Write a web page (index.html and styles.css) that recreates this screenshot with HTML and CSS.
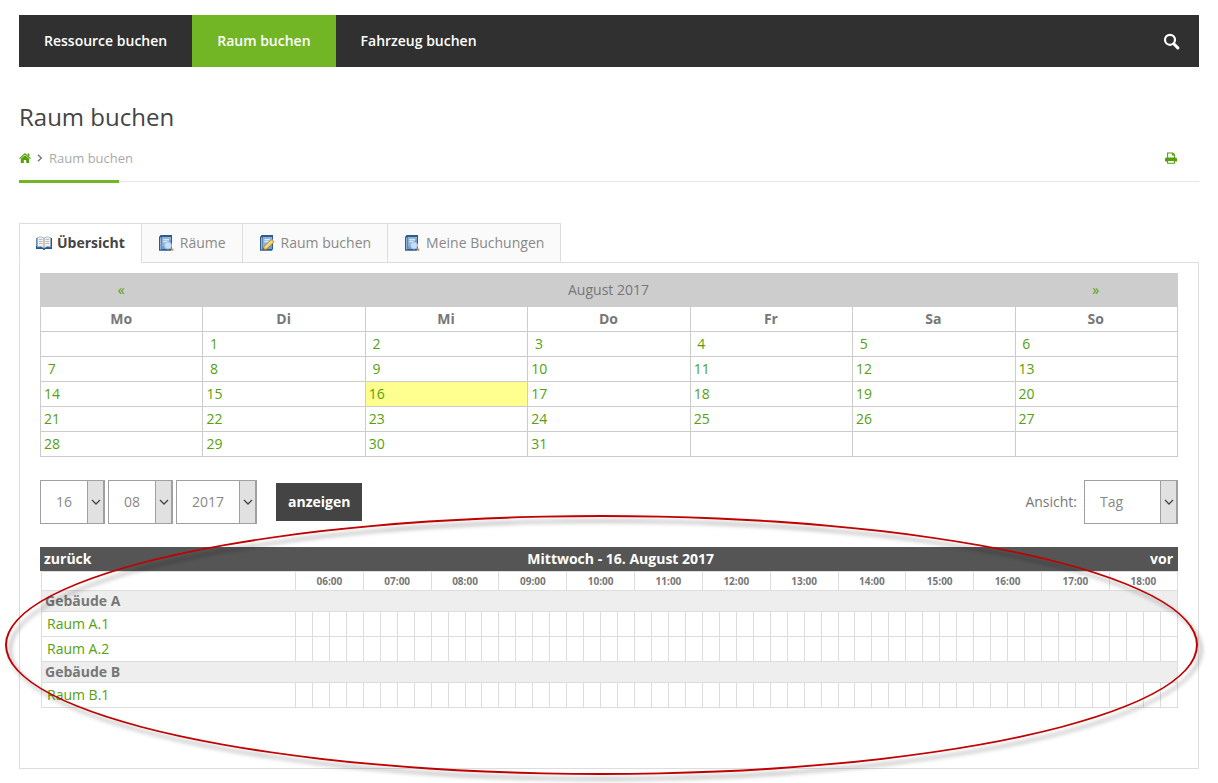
FILE: index.html
```html
<!DOCTYPE html>
<html lang="de">
<head>
<meta charset="utf-8">
<title>Raum buchen</title>
<link rel="stylesheet" href="styles.css">
</head>
<body>
<svg class="symbols" aria-hidden="true">
  <symbol id="book" viewBox="0 0 16 16">
    <path d="M1 2L2.500 0H14v14l-1 1.800H1z" fill="#2f5a8f"/>
    <path d="M2 2.500h1.500v12H2z" fill="#8fb2d6"/>
    <path d="M4 2h9v12H4z" fill="#6f9cc8"/>
    <path d="M4 2h9v2L4 12z" fill="#8db3d8"/>
    <path d="M5.500 4.500h5.500v3.500h-5.500z" fill="#a9c8e4"/>
    <path d="M5.500 4.500H11M5.500 6.500H9" stroke="#dce9f5"/>
  </symbol>
  <symbol id="book-search" viewBox="0 0 16 16">
    <use href="#book" width="16" height="16"/>
    <circle cx="10" cy="10.500" r="3.500" fill="#c6def7" stroke="#a3c2e6"/>
    <path d="M12.800 13.200l2.200 2.200" stroke="#c98444" stroke-width="1.800"/>
  </symbol>
  <symbol id="chevron" viewBox="0 0 10 6">
    <path d="M1 1l4 4 4-4" fill="none" stroke="#444" stroke-width="1.300"/>
  </symbol>
</svg>

<div class="page">
  <nav class="main-nav">
    <a href="#ressource">Ressource buchen</a>
    <a href="#raum" class="current">Raum buchen</a>
    <a href="#fahrzeug">Fahrzeug buchen</a>
    <button class="search" type="button" aria-label="Suche">
      <svg width="17" height="17" viewBox="0 0 17 17"><circle cx="7" cy="6.800" r="5" fill="none" stroke="#fff" stroke-width="2.200"/><path d="M10.700 10.800l4.100 4.100" stroke="#fff" stroke-width="3" stroke-linecap="round"/></svg>
    </button>
  </nav>

  <header class="page-head">
    <h1>Raum buchen</h1>
    <div class="breadcrumb">
      <a href="#start" aria-label="Startseite"><svg width="12" height="12" viewBox="0 0 12 12"><path d="M6 3.200l4.200 3.600V11H7.200V8H4.800v3H1.800V6.800z" fill="currentColor"/><path d="M.5 6.600L6 1.900l5.500 4.700" fill="none" stroke="currentColor" stroke-width="1.200"/><path d="M8.600 1.500h1.700v3.300L8.600 3.400z" fill="currentColor"/></svg></a>
      <svg class="sep" width="6" height="8" viewBox="0 0 6 8"><path d="M1 .8L4.300 4 1 7.200" fill="none" stroke="currentColor" stroke-width="1.400"/></svg>
      <span>Raum buchen</span>
      <a href="#drucken" class="print" aria-label="Drucken"><svg width="12" height="12" viewBox="0 0 12 12"><path d="M2.600 6V1h5.200l1.600 1.600V6M7.500 1v2h2" fill="none" stroke="currentColor" stroke-width="1.100"/><path d="M1.500 5.500h9q1.500 0 1.500 1.500V9.500H0V7Q0 5.500 1.500 5.500z" fill="currentColor"/><path d="M2.600 8.500h6.800v2.800H2.600z" fill="#fff" stroke="currentColor" stroke-width="1.100"/></svg></a>
    </div>
  </header>

  <div class="tabs">
    <a href="#uebersicht" class="tab active"><svg width="16" height="16" viewBox="0 0 16 16"><path d="M0 3h16v11H9.500l-1 1h-1l-1-1H0z" fill="#1f5794"/><path d="M0 3h1.500v8H0z" fill="#5c8fc4"/><path d="M1.500 2.500Q5 1 8 3q3-2 6.500-.5v9.500Q11 10.500 8 13 5 10.500 1.500 12z" fill="#f1f1ef" stroke="#9caabb" stroke-width=".8"/><path d="M8 3v9.500" stroke="#9a9a9a"/><path d="M3 4.500h3.500M3 6.500h3.500M3 8.500h3.500M9.500 4.500H13M9.500 6.500H13M9.500 8.500H13" stroke="#bdbdbd"/></svg>Übersicht</a>
    <a href="#raeume" class="tab"><svg width="16" height="16"><use href="#book-search"/></svg>Räume</a>
    <a href="#buchen" class="tab"><svg width="16" height="16" viewBox="0 0 16 16"><use href="#book" width="16" height="16"/><path d="M4 14.800l1-3.300L12.500 4.500 15 7l-7.500 7z" fill="#f8cf55" stroke="#bf8735" stroke-width=".8"/><path d="M6.300 12.500l7-6.700" stroke="#fff0a8"/><path d="M4 14.800l.6-1.900 1.300 1.300z" fill="#443a34"/><path d="M12 5l1-1 2.500 2.500-1 1z" fill="#e79a6a"/></svg>Raum buchen</a>
    <a href="#meine" class="tab"><svg width="16" height="16"><use href="#book-search"/></svg>Meine Buchungen</a>
    <span class="tab-rest"></span>
  </div>

  <main class="panel">
    <table class="calendar">
      <thead>
        <tr class="month"><td><a href="#juli">«</a></td><td colspan="5">August 2017</td><td><a href="#september">»</a></td></tr>
        <tr><th>Mo</th><th>Di</th><th>Mi</th><th>Do</th><th>Fr</th><th>Sa</th><th>So</th></tr>
      </thead>
      <tbody>
        <tr><td></td><td>&nbsp;<a href="#d1">1</a></td><td>&nbsp;<a href="#d2">2</a></td><td>&nbsp;<a href="#d3">3</a></td><td>&nbsp;<a href="#d4">4</a></td><td>&nbsp;<a href="#d5">5</a></td><td>&nbsp;<a href="#d6">6</a></td></tr>
        <tr><td>&nbsp;<a href="#d7">7</a></td><td>&nbsp;<a href="#d8">8</a></td><td>&nbsp;<a href="#d9">9</a></td><td><a href="#d10">10</a></td><td><a href="#d11">11</a></td><td><a href="#d12">12</a></td><td><a href="#d13">13</a></td></tr>
        <tr><td><a href="#d14">14</a></td><td><a href="#d15">15</a></td><td class="selected"><a href="#d16">16</a></td><td><a href="#d17">17</a></td><td><a href="#d18">18</a></td><td><a href="#d19">19</a></td><td><a href="#d20">20</a></td></tr>
        <tr><td><a href="#d21">21</a></td><td><a href="#d22">22</a></td><td><a href="#d23">23</a></td><td><a href="#d24">24</a></td><td><a href="#d25">25</a></td><td><a href="#d26">26</a></td><td><a href="#d27">27</a></td></tr>
        <tr><td><a href="#d28">28</a></td><td><a href="#d29">29</a></td><td><a href="#d30">30</a></td><td><a href="#d31">31</a></td><td></td><td></td><td></td></tr>
      </tbody>
    </table>

    <form class="controls">
      <span class="select"><select aria-label="Tag"><option>16</option></select><span class="arrow"><svg width="10" height="6"><use href="#chevron"/></svg></span></span>
      <span class="select"><select aria-label="Monat"><option>08</option></select><span class="arrow"><svg width="10" height="6"><use href="#chevron"/></svg></span></span>
      <span class="select year"><select aria-label="Jahr"><option>2017</option></select><span class="arrow"><svg width="10" height="6"><use href="#chevron"/></svg></span></span>
      <button class="show" type="button">anzeigen</button>
      <label class="view-label" for="view">Ansicht:</label>
      <span class="select view"><select id="view"><option>Tag</option></select><span class="arrow"><svg width="10" height="6"><use href="#chevron"/></svg></span></span>
    </form>

    <section class="schedule">
      <div class="day-bar"><a href="#zurueck">zurück</a><span class="day">Mittwoch - 16. August 2017</span><a href="#vor">vor</a></div>
      <table class="slots">
        <colgroup><col class="room-col"><col span="52"></colgroup>
        <thead>
          <tr><td></td><th colspan="4">06:00</th><th colspan="4">07:00</th><th colspan="4">08:00</th><th colspan="4">09:00</th><th colspan="4">10:00</th><th colspan="4">11:00</th><th colspan="4">12:00</th><th colspan="4">13:00</th><th colspan="4">14:00</th><th colspan="4">15:00</th><th colspan="4">16:00</th><th colspan="4">17:00</th><th colspan="4">18:00</th></tr>
        </thead>
        <tbody>
          <tr class="group"><th colspan="53">Gebäude A</th></tr>
          <tr class="room"><td><a href="#a1">Raum A.1</a></td><td></td><td></td><td></td><td></td><td></td><td></td><td></td><td></td><td></td><td></td><td></td><td></td><td></td><td></td><td></td><td></td><td></td><td></td><td></td><td></td><td></td><td></td><td></td><td></td><td></td><td></td><td></td><td></td><td></td><td></td><td></td><td></td><td></td><td></td><td></td><td></td><td></td><td></td><td></td><td></td><td></td><td></td><td></td><td></td><td></td><td></td><td></td><td></td><td></td><td></td><td></td><td></td></tr>
          <tr class="room"><td><a href="#a2">Raum A.2</a></td><td></td><td></td><td></td><td></td><td></td><td></td><td></td><td></td><td></td><td></td><td></td><td></td><td></td><td></td><td></td><td></td><td></td><td></td><td></td><td></td><td></td><td></td><td></td><td></td><td></td><td></td><td></td><td></td><td></td><td></td><td></td><td></td><td></td><td></td><td></td><td></td><td></td><td></td><td></td><td></td><td></td><td></td><td></td><td></td><td></td><td></td><td></td><td></td><td></td><td></td><td></td><td></td></tr>
          <tr class="group"><th colspan="53">Gebäude B</th></tr>
          <tr class="room"><td><a href="#b1">Raum B.1</a></td><td></td><td></td><td></td><td></td><td></td><td></td><td></td><td></td><td></td><td></td><td></td><td></td><td></td><td></td><td></td><td></td><td></td><td></td><td></td><td></td><td></td><td></td><td></td><td></td><td></td><td></td><td></td><td></td><td></td><td></td><td></td><td></td><td></td><td></td><td></td><td></td><td></td><td></td><td></td><td></td><td></td><td></td><td></td><td></td><td></td><td></td><td></td><td></td><td></td><td></td><td></td><td></td></tr>
        </tbody>
      </table>
      <div class="highlight" aria-hidden="true"></div>
    </section>
  </main>
</div>
</body>
</html>
```

FILE: styles.css
```css
* { box-sizing: border-box; }

body {
  margin: 0;
  background: #fff;
  color: #777;
  font: 14px/20px "Open Sans", "Noto Sans", sans-serif;
}

a { color: #56a00e; text-decoration: none; }
svg { display: block; flex: none; }
table { border-collapse: collapse; table-layout: fixed; width: 100%; }
select, button { font: inherit; }
.symbols { position: absolute; width: 0; height: 0; }
.page { padding: 15px 19px 14px; }

/* Navigation */
.main-nav { display: flex; background: #303030; height: 52px; }
.main-nav a { padding: 16px 25px; color: #fff; font-weight: 600; }
.main-nav .current { background: #72b626; }
.search { margin-left: auto; padding: 0 19px; border: 0; background: none; cursor: pointer; }

/* Heading and breadcrumb */
.page-head { position: relative; padding-top: 34px; border-bottom: 1px solid #e7e7e7; }
.page-head::after {
  content: "";
  position: absolute;
  left: 0;
  bottom: -2px;
  width: 100px;
  height: 3px;
  background: #72b626;
}
h1 { margin: 0; color: #444; font-size: 24px; font-weight: 400; line-height: 32px; }
.breadcrumb {
  display: flex;
  align-items: center;
  padding: 15px 22px 13px 0;
  color: #aaa;
  font-size: 13px;
}
.breadcrumb .sep { margin: 0 6px; color: #777; }
.breadcrumb .print { margin-left: auto; }

/* Tabs */
.tabs { display: flex; margin-top: 41px; }
.tab {
  display: flex;
  align-items: center;
  gap: 6px;
  height: 40px;
  padding: 0 16px;
  border: 1px solid #ddd;
  border-left: 0;
  background: #fafafa;
  color: #888;
}
.tab.active {
  gap: 5px;
  border-left: 1px solid #ddd;
  border-bottom-color: #fff;
  background: #fff;
  color: #444;
  font-weight: 700;
}
.tab-rest { flex: 1; border-bottom: 1px solid #ddd; }

.panel { padding: 10px 20px 60px; border: 1px solid #ddd; border-top: 0; }

/* Calendar */
.calendar th, .calendar td { height: 25px; padding: 0 4px 0 3px; border: 1px solid #ccc; }
.calendar .month td { height: 33px; border-color: #cdcdcd; background: #cdcdcd; text-align: center; }
.calendar .month td + td { border-left: 0; }
.calendar .selected { background: #ffff90; }

/* Date and view controls */
.controls { display: flex; align-items: center; gap: 3px; margin: 23px 0; }
.select { position: relative; width: 65px; height: 44px; }
.select select {
  width: 100%;
  height: 100%;
  padding: 0 18px 0 15px;
  border: 1px solid #a0a0a0;
  border-radius: 0;
  appearance: none;
  background: #fff;
  color: #888;
}
.select.year { width: 81px; }
.select.view { width: 94px; }
.arrow {
  position: absolute;
  top: 0;
  right: 0;
  bottom: 0;
  display: grid;
  place-items: center;
  width: 18px;
  border: 1px solid #a0a0a0;
  border-right-width: 2px;
  background: #e1e1e1;
  pointer-events: none;
}
.show {
  height: 38px;
  margin-left: 16px;
  padding: 0 12px;
  border: 0;
  background: #444;
  color: #fff;
  font-weight: 700;
}
.view-label { margin: 0 4px 0 auto; }

/* Day schedule */
.schedule { position: relative; }
.day-bar {
  display: flex;
  padding: 2px 5px 2px 4px;
  background: #555;
  color: #fff;
  font-weight: 700;
}
.day-bar a { color: #fff; }
.day-bar .day { flex: 1; text-align: center; }
.slots { width: calc(100% - 1px); margin-left: 1px; }
.slots .room-col { width: 254px; }
.slots th, .slots td { padding: 0; border: 1px solid #ddd; }
.slots thead th { height: 19px; font-size: 10px; line-height: 16px; }
.slots .group th { height: 21px; padding-left: 3px; background: #eee; text-align: left; }
.slots .room td { height: 25px; }
.slots .room td:first-child { padding-left: 5px; }

.highlight {
  position: absolute;
  top: -32px;
  right: -20px;
  left: -35px;
  height: 260px;
  border: 2px solid #c00000;
  border-radius: 50%;
  filter: drop-shadow(4px 5px 2px rgba(0, 0, 0, 0.4));
  pointer-events: none;
}
```
